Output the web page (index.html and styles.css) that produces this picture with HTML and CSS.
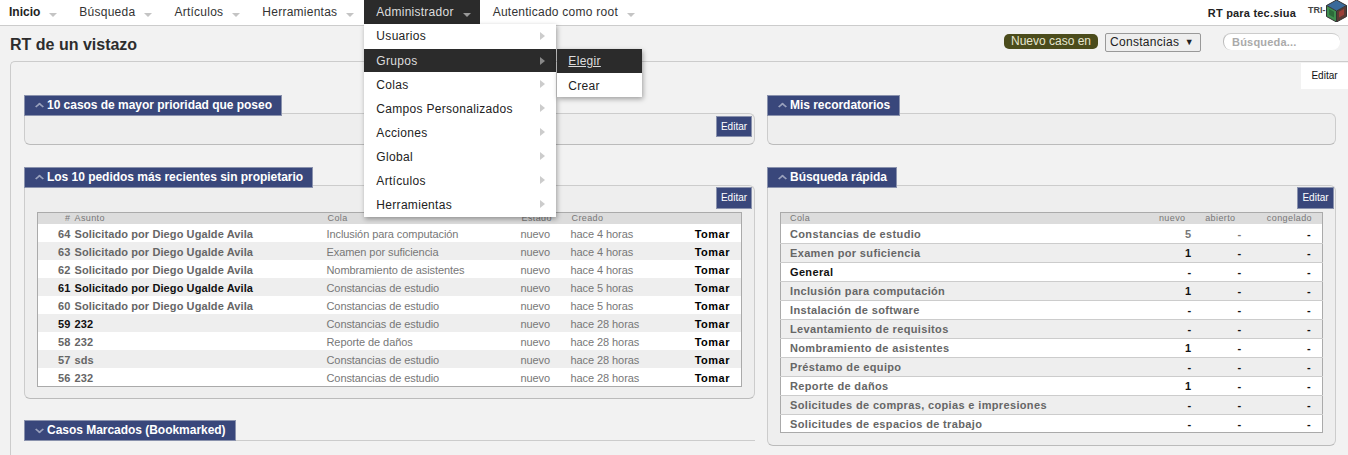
FILE: index.html
```html
<!DOCTYPE html>
<html lang="es">
<head>
  <meta charset="UTF-8" />
  <title>RT de un vistazo</title>
  <link rel="stylesheet" href="styles.css">
</head>
<body>
  <nav class="topbar">
    <ul class="mainmenu">
      <li class="top-item first"><b>Inicio</b><i class="caret"></i></li>
      <li class="top-item">Búsqueda<i class="caret"></i></li>
      <li class="top-item">Artículos<i class="caret"></i></li>
      <li class="top-item">Herramientas<i class="caret"></i></li>
      <li class="top-item active">Administrador<i class="caret"></i>
        <ul class="dropdown">
          <li>Usuarios<i class="arrow"></i></li>
          <li class="on">Grupos<i class="arrow"></i>
            <ul class="submenu">
              <li class="on"><u>Elegir</u></li>
              <li>Crear</li>
            </ul>
          </li>
          <li>Colas<i class="arrow"></i></li>
          <li>Campos Personalizados<i class="arrow"></i></li>
          <li>Acciones<i class="arrow"></i></li>
          <li>Global<i class="arrow"></i></li>
          <li>Artículos<i class="arrow"></i></li>
          <li>Herramientas<i class="arrow"></i></li>
        </ul>
      </li>
      <li class="top-item">Autenticado como root<i class="caret"></i></li>
    </ul>
    <div class="brand">
      <span class="rtname">RT para tec.siua</span>
      <span class="tri">TRI-</span>
      <svg class="cube" width="21" height="22" viewBox="0 0 21 22">
        <polygon points="10.5,0 20.5,5.5 10.5,11 0.5,5.5" fill="#3a6a9a"/>
        <polygon points="0.5,5.5 10.5,11 10.5,22 0.5,16.5" fill="#3f8f4f"/>
        <polygon points="20.5,5.5 10.5,11 10.5,22 20.5,16.5" fill="#5a3a34"/>
        <polygon points="3,9 8,11.8 8,17.5 3,14.8" fill="#2c6a3a"/>
        <polygon points="18,9 13,11.8 13,17.5 18,14.8" fill="#9a3f38"/>
        <path d="M10.5 0 20.5 5.5V16.5L10.5 22 .5 16.5V5.5ZM10.5 11V22M10.5 11 .5 5.5M10.5 11 20.5 5.5" fill="none" stroke="#333" stroke-width="1"/>
      </svg>
    </div>
  </nav>

  <header class="pagehead">
    <h1>RT de un vistazo</h1>
    <div class="actions">
      <span class="newcase">Nuevo caso en</span>
      <span class="queue-select">Constancias <span class="queue-arrow">▼</span></span>
      <input class="search" type="text" placeholder="Búsqueda...">
    </div>
  </header>

  <main class="dash">
    <a class="edit-tab">Editar</a>
    <div class="col col-left">
      <section class="box box-a">
        <h2 class="titlebox"><i class="chev"></i>10 casos de mayor prioridad que poseo</h2>
        <div class="boxbody short"><a class="edit">Editar</a></div>
      </section>

      <section class="box box-b">
        <h2 class="titlebox"><i class="chev"></i>Los 10 pedidos más recientes sin propietario</h2>
        <div class="boxbody">
          <a class="edit">Editar</a>
          <table class="tickets">
            <colgroup>
              <col class="c-id"><col class="c-subject"><col class="c-queue"><col class="c-status"><col class="c-created"><col class="c-take">
            </colgroup>
            <thead>
              <tr><th class="num">#</th><th>Asunto</th><th class="shift">Cola</th><th class="shift">Estado</th><th class="shift">Creado</th><th></th></tr>
            </thead>
            <tbody>
              <tr><td class="num">64</td><td class="subj">Solicitado por Diego Ugalde Avila</td><td>Inclusión para computación</td><td>nuevo</td><td>hace 4 horas</td><td class="take">Tomar</td></tr>
              <tr><td class="num">63</td><td class="subj">Solicitado por Diego Ugalde Avila</td><td>Examen por suficiencia</td><td>nuevo</td><td>hace 4 horas</td><td class="take">Tomar</td></tr>
              <tr><td class="num">62</td><td class="subj">Solicitado por Diego Ugalde Avila</td><td>Nombramiento de asistentes</td><td>nuevo</td><td>hace 4 horas</td><td class="take">Tomar</td></tr>
              <tr class="unread"><td class="num">61</td><td class="subj">Solicitado por Diego Ugalde Avila</td><td>Constancias de estudio</td><td>nuevo</td><td>hace 5 horas</td><td class="take">Tomar</td></tr>
              <tr><td class="num">60</td><td class="subj">Solicitado por Diego Ugalde Avila</td><td>Constancias de estudio</td><td>nuevo</td><td>hace 5 horas</td><td class="take">Tomar</td></tr>
              <tr class="unread"><td class="num">59</td><td class="subj">232</td><td>Constancias de estudio</td><td>nuevo</td><td>hace 28 horas</td><td class="take">Tomar</td></tr>
              <tr><td class="num">58</td><td class="subj">232</td><td>Reporte de daños</td><td>nuevo</td><td>hace 28 horas</td><td class="take">Tomar</td></tr>
              <tr><td class="num">57</td><td class="subj">sds</td><td>Constancias de estudio</td><td>nuevo</td><td>hace 28 horas</td><td class="take">Tomar</td></tr>
              <tr><td class="num">56</td><td class="subj">232</td><td>Constancias de estudio</td><td>nuevo</td><td>hace 28 horas</td><td class="take">Tomar</td></tr>
            </tbody>
          </table>
        </div>
      </section>

      <section class="box box-c">
        <h2 class="titlebox"><i class="chev down"></i>Casos Marcados (Bookmarked)</h2>
      </section>
    </div>

    <div class="col col-right">
      <section class="box box-a">
        <h2 class="titlebox"><i class="chev"></i>Mis recordatorios</h2>
        <div class="boxbody short"></div>
      </section>

      <section class="box box-b">
        <h2 class="titlebox"><i class="chev"></i>Búsqueda rápida</h2>
        <div class="boxbody quick-body">
          <a class="edit">Editar</a>
          <table class="quick">
            <colgroup>
              <col class="q-name"><col class="q-new"><col class="q-open"><col class="q-frozen">
            </colgroup>
            <thead>
              <tr><th>Cola</th><th class="r">nuevo</th><th class="r">abierto</th><th class="r">congelado</th></tr>
            </thead>
            <tbody>
              <tr class="dim"><td>Constancias de estudio</td><td class="r">5</td><td class="r">-</td><td class="r last hit">-</td></tr>
              <tr><td>Examen por suficiencia</td><td class="r hit">1</td><td class="r hit">-</td><td class="r hit last">-</td></tr>
              <tr class="unread"><td>General</td><td class="r hit">-</td><td class="r hit">-</td><td class="r hit last">-</td></tr>
              <tr><td>Inclusión para computación</td><td class="r hit">1</td><td class="r hit">-</td><td class="r hit last">-</td></tr>
              <tr><td>Instalación de software</td><td class="r hit">-</td><td class="r hit">-</td><td class="r hit last">-</td></tr>
              <tr><td>Levantamiento de requisitos</td><td class="r hit">-</td><td class="r hit">-</td><td class="r hit last">-</td></tr>
              <tr><td>Nombramiento de asistentes</td><td class="r hit">1</td><td class="r hit">-</td><td class="r hit last">-</td></tr>
              <tr><td>Préstamo de equipo</td><td class="r hit">-</td><td class="r hit">-</td><td class="r hit last">-</td></tr>
              <tr><td>Reporte de daños</td><td class="r hit">1</td><td class="r hit">-</td><td class="r hit last">-</td></tr>
              <tr><td>Solicitudes de compras, copias e impresiones</td><td class="r hit">-</td><td class="r hit">-</td><td class="r hit last">-</td></tr>
              <tr><td>Solicitudes de espacios de trabajo</td><td class="r hit">-</td><td class="r hit">-</td><td class="r hit last">-</td></tr>
            </tbody>
          </table>
        </div>
      </section>
    </div>
  </main>
</body>
</html>
```

FILE: styles.css
```css
* {
  box-sizing: border-box;
}
html, body {
  height: 455px;
  overflow: hidden;
}
body {
  margin: 0;
  background: #f2f2f2;
  color: #222;
  font-family: "Liberation Sans", Arial, sans-serif;
  font-size: 12px;
}
ul {
  list-style: none;
  margin: 0;
  padding: 0;
}

/* top menu */
.topbar {
  height: 26px;
  background: #fff;
  border-bottom: 1px solid #ccc;
  display: flex;
  justify-content: space-between;
  letter-spacing: 0.25px;
}
.mainmenu {
  display: flex;
  height: 24px;
}
.top-item {
  position: relative;
  height: 24px;
  line-height: 24px;
  margin-right: 1px;
  padding: 0 9px 0 12px;
  color: #333;
  white-space: nowrap;
}
.top-item.first {
  padding-left: 9px;
  padding-right: 9px;
  color: #222;
}
.top-item b {
  letter-spacing: 0;
}
.top-item.active {
  background: #2b2b2b;
  color: #ddd;
  z-index: 5;
}
.caret {
  display: inline-block;
  width: 0;
  height: 0;
  margin-left: 9px;
  vertical-align: -1px;
  border-left: 4px solid transparent;
  border-right: 4px solid transparent;
  border-top: 4px solid #c4c4c4;
}
.active .caret {
  border-top-color: #999;
}
.dropdown {
  position: absolute;
  left: 0;
  top: 24px;
  width: 192px;
  padding-bottom: 1px;
  background: #fff;
  box-shadow: 1px 2px 5px rgba(0, 0, 0, 0.35);
  color: #222;
  letter-spacing: 0.3px;
}
.dropdown li {
  position: relative;
  height: 24px;
  line-height: 24px;
  padding: 1px 0 0 12px;
}
.dropdown > li:first-child {
  height: 25px;
  padding-top: 0;
}
.dropdown > li.on {
  height: 23px;
  line-height: 24px;
  padding-top: 0;
  background: #2b2b2b;
  color: #ddd;
}
.arrow {
  position: absolute;
  right: 11px;
  top: 8px;
  border-top: 4px solid transparent;
  border-bottom: 4px solid transparent;
  border-left: 5px solid #ccc;
}
.on .arrow {
  border-left-color: #888;
}
.submenu {
  position: absolute;
  left: 193px;
  top: 0;
  width: 85px;
  background: #fff;
  box-shadow: 1px 2px 5px rgba(0, 0, 0, 0.35);
  color: #222;
}
.submenu li {
  padding-left: 11px;
}
.submenu li.on {
  padding-top: 0;
  background: #2b2b2b;
  color: #ddd;
}
.brand {
  display: flex;
  align-items: flex-start;
  padding-right: 1px;
}
.rtname {
  font-weight: bold;
  font-size: 11px;
  line-height: 26px;
  margin-right: 12px;
  letter-spacing: 0.2px;
}
.tri {
  font-size: 9px;
  font-weight: bold;
  line-height: 20px;
  letter-spacing: 0;
  color: #444;
  width: 18px;
}

/* title row */
.pagehead {
  height: 35px;
  display: flex;
  justify-content: space-between;
  padding: 0 8px 0 10px;
}
.pagehead h1 {
  margin: 10px 0 0;
  font-size: 16px;
  line-height: 18px;
  color: #2d2d2d;
}
.actions {
  display: flex;
  align-items: flex-start;
  padding-top: 7px;
  letter-spacing: 0.3px;
}
.newcase {
  width: 94px;
  height: 15px;
  margin-top: 1px;
  line-height: 15px;
  text-align: center;
  border-radius: 5px;
  background: #4b4c1c;
  color: #e6e6d0;
  letter-spacing: 0;
}
.queue-select {
  display: flex;
  justify-content: space-between;
  width: 96px;
  height: 19px;
  margin-left: 7px;
  padding: 0 6px 0 4px;
  line-height: 17px;
  background: #eee;
  border: 1px solid #999;
  border-radius: 2px;
}
.queue-arrow {
  font-size: 9px;
}
.search {
  width: 117px;
  height: 17px;
  margin: 0 0 0 22px;
  padding: 0 0 0 8px;
  border: 0;
  border-left: 1px solid #bbb;
  border-top: 1px solid #ccc;
  border-radius: 8px;
  background: #fff;
  font: bold 11px "Liberation Sans", Arial, sans-serif;
  letter-spacing: 0.2px;
}
.search::placeholder {
  color: #aaa;
  opacity: 1;
}

/* dashboard */
.dash {
  position: relative;
  display: flex;
  gap: 12px;
  height: 394px;
  margin-left: 10px;
  padding: 33px 12px 0 13px;
  border: 1px solid #ccc;
  border-right: 0;
  border-bottom: 0;
  border-radius: 5px 0 0 0;
}
.edit-tab {
  position: absolute;
  top: 1px;
  right: 0;
  width: 47px;
  height: 26px;
  line-height: 26px;
  text-align: center;
  background: #fff;
  color: #111;
  font-size: 10px;
}
.col-left {
  width: 731px;
}
.col-right {
  width: 569px;
}
.box {
  position: relative;
}
.box-a {
  margin-bottom: 22px;
}
.box-b {
  margin-bottom: 21px;
}
.titlebox {
  position: relative;
  z-index: 1;
  display: inline-block;
  height: 21px;
  margin: 0;
  padding: 0 9px;
  line-height: 19px;
  background: #39477b;
  border: 1px solid #8a92ad;
  color: #fff;
  font-size: 12px;
  font-weight: bold;
  vertical-align: top;
  white-space: nowrap;
  letter-spacing: -0.03px;
}
.chev {
  display: inline-block;
  width: 7px;
  height: 7px;
  margin: 0 4px 0 2px;
  border-left: 2px solid #9aa2bd;
  border-top: 2px solid #9aa2bd;
  transform: scale(0.9, 0.75) rotate(45deg);
  vertical-align: -1px;
}
.chev.down {
  transform: scale(0.9, 0.75) rotate(225deg);
  vertical-align: 1px;
}
.boxbody {
  position: relative;
  margin-top: -3px;
  background: #eee;
  border: 1px solid #ccc;
  border-radius: 0 6px 6px 6px;
  border-bottom-color: #bbb;
  height: 214px;
  padding: 26px 12px 0 12px;
}
.boxbody.short {
  height: 32px;
  padding: 0;
}
.quick-body {
  height: 261px;
}
.box-c {
  height: 21px;
  border-bottom: 1px solid #ccc;
}
.edit {
  position: absolute;
  top: 2px;
  right: 2px;
  width: 36px;
  height: 21px;
  line-height: 19px;
  text-align: center;
  background: #39477b;
  border: 1px solid #8a92ad;
  color: #fff;
  font-size: 10px;
}
.box-b .edit {
  top: 1px;
  height: 22px;
  line-height: 20px;
}
.quick-body .edit {
  right: 1px;
  width: 37px;
}

/* tables */
table {
  width: 100%;
  table-layout: fixed;
  border-collapse: collapse;
  background: #fff;
  border: 1px solid #aaa;
  font-size: 11px;
}
th {
  height: 11px;
  padding: 0;
  background: #dcdcdc;
  color: #777;
  font-size: 9px;
  line-height: 11px;
  font-weight: normal;
  text-align: left;
  letter-spacing: 0.4px;
}
th.shift {
  padding-left: 1px;
}
.tickets td {
  height: 18px;
  padding: 1px 0 0;
  color: #777;
  white-space: nowrap;
  letter-spacing: -0.08px;
}
.tickets tbody tr:last-child td {
  padding-top: 2px;
}
.tickets tbody tr:nth-child(even) {
  background: #eee;
}
.c-id { width: 37px; }
.c-subject { width: 252px; }
.c-queue { width: 194px; }
.c-status { width: 50px; }
.c-created { width: 115px; }
.tickets .num {
  padding-right: 4px;
  text-align: right;
}
.tickets td.num,
.tickets td.subj {
  font-weight: bold;
  color: #666;
  letter-spacing: 0.1px;
}
.tickets .unread td.num,
.tickets .unread td.subj {
  color: #111;
}
.tickets td.take {
  padding-right: 11px;
  color: #000;
  font-weight: bold;
  text-align: right;
  letter-spacing: 0.5px;
}

.quick-body .quick {
  width: 543px;
}
.q-new { width: 50px; }
.q-open { width: 50px; }
.q-frozen { width: 77px; }
.quick th:first-child,
.quick td:first-child {
  padding-left: 9px;
}
.quick td {
  height: 19px;
  padding: 0;
  border-bottom: 1px solid #ccc;
  color: #666;
  font-weight: bold;
  white-space: nowrap;
  letter-spacing: 0.35px;
}
.quick tbody tr:nth-child(even) {
  background: #eee;
}
.quick tbody tr:first-child td {
  padding-top: 1px;
}
.quick tbody tr:last-child td {
  height: 18px;
  padding-top: 2px;
  border-bottom: 0;
}
.quick th.r {
  padding-right: 10px;
  text-align: right;
}
.quick td.r {
  padding-right: 4px;
  text-align: right;
}
.quick td.last {
  padding-right: 11px;
}
.quick .dim td.r {
  color: #777;
}
.quick .dim td.hit,
.quick td.hit,
.quick .unread td {
  color: #111;
}
```
